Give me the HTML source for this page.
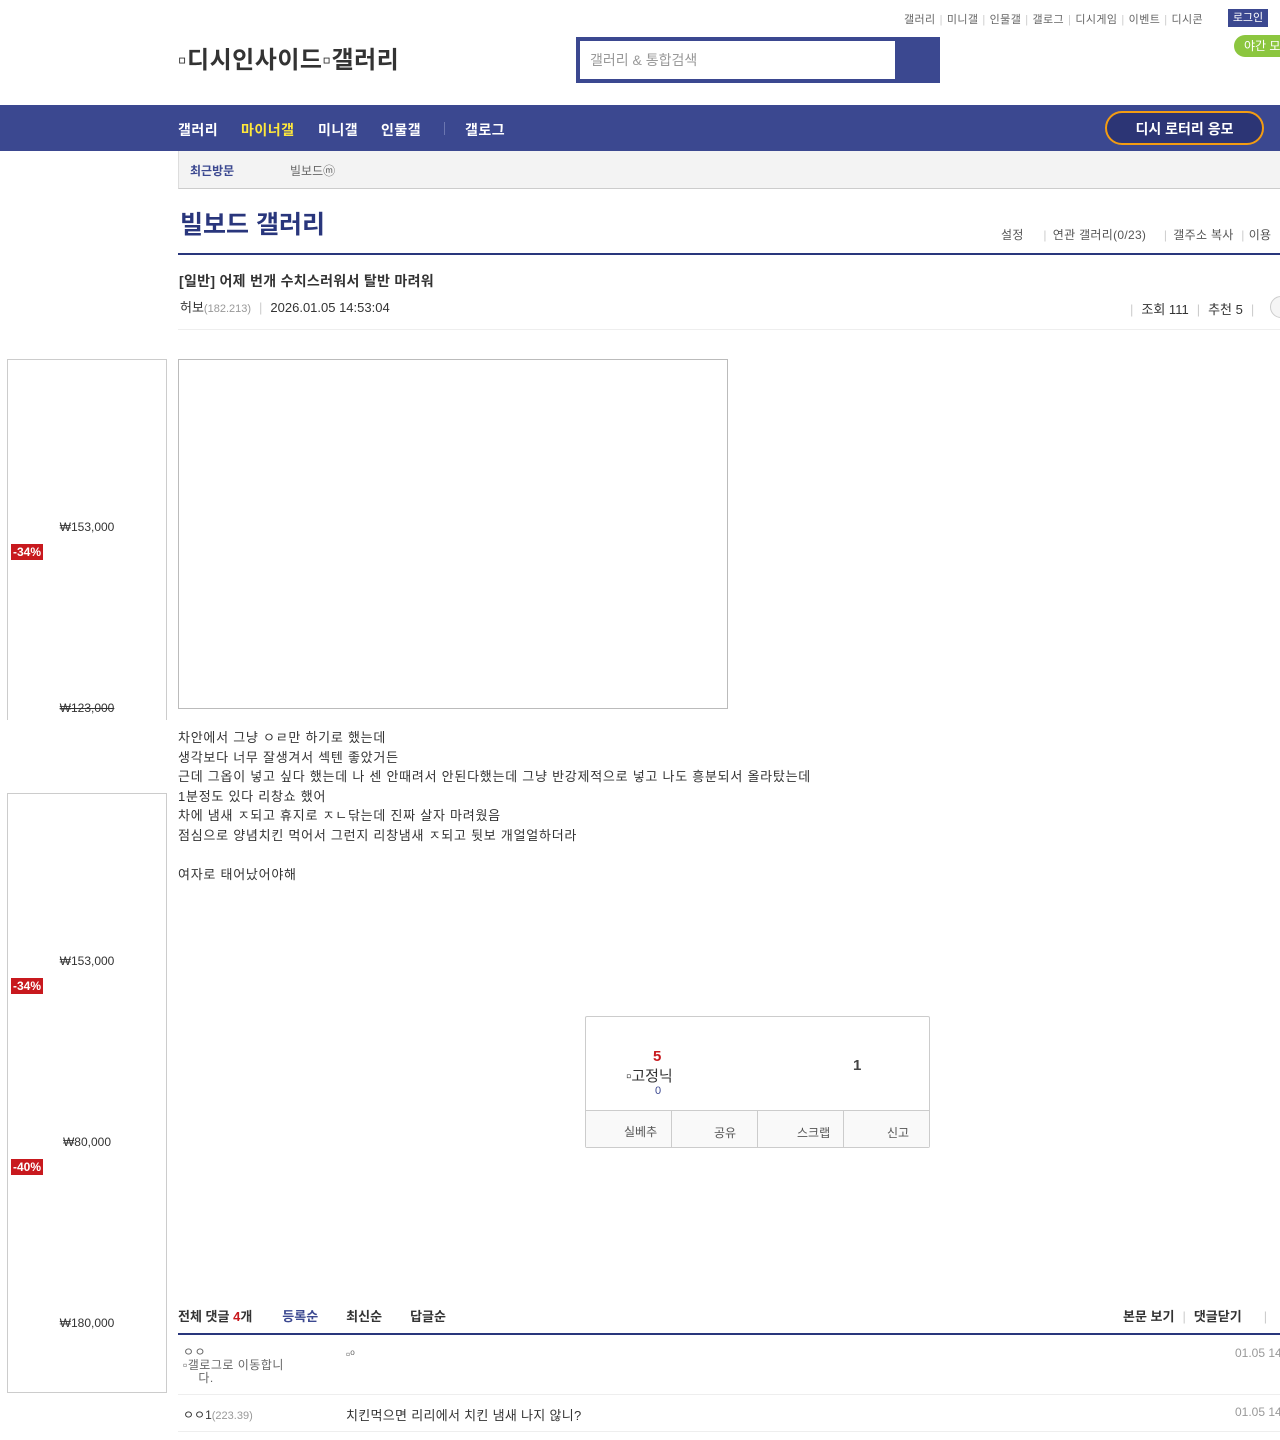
<!DOCTYPE html>
<html><head><meta charset="utf-8"><style>
*{margin:0;padding:0;box-sizing:border-box}
body{width:1280px;height:1440px;position:relative;overflow:hidden;background:#fff;font-family:"Liberation Sans","Noto Sans CJK KR",sans-serif;color:#333}
.a{position:absolute;white-space:nowrap}
.top{font-size:11px;color:#666;letter-spacing:0.4px}
.top span{color:#ccc;margin:0 4px}
.nav{background:#3b4890;top:105px;left:0;width:1280px;height:46px}
.nav .i{color:#fff;font-size:14px;font-weight:bold;top:15px;letter-spacing:0.5px}
.sb{border:1px solid #ccc;border-top:none}
.p{font-size:12px;color:#333;width:158px;text-align:center}
.d{background:#c8191e;color:#fff;font-size:12px;font-weight:bold;padding:0 2px;height:16px;line-height:16px}
.body{font-size:13px;color:#333;line-height:19.5px;letter-spacing:0.75px}
</style></head><body>
<div class="a top" style="top:11px;left:904px">갤러리<span>|</span>미니갤<span>|</span>인물갤<span>|</span>갤로그<span>|</span>디시게임<span>|</span>이벤트<span>|</span>디시콘</div>
<div class="a" style="top:9px;left:1228px;width:40px;height:18px;background:#3b4890;color:#fff;font-size:11px;line-height:18px;text-align:center">로그인</div>
<div class="a" style="top:35px;left:1234px;width:60px;height:22px;background:#8cc63f;border-radius:11px;color:#fff;font-size:12px;line-height:22px;padding-left:10px">야간 모드</div>
<div class="a" style="top:40px;left:178px;font-size:24px;font-weight:bold;color:#333;letter-spacing:0.5px">▫디시인사이드▫갤러리</div>
<div class="a" style="top:37px;left:576px;width:364px;height:46px;background:#3b4890"><div class="a" style="top:4px;left:4px;width:315px;height:38px;background:#fff;color:#999;font-size:14px;line-height:38px;padding-left:10px">갤러리 &amp; 통합검색</div></div>
<div class="a nav">
<div class="a i" style="left:178px">갤러리</div>
<div class="a i" style="left:241px;color:#ffe83b">마이너갤</div>
<div class="a i" style="left:318px">미니갤</div>
<div class="a i" style="left:381px">인물갤</div>
<div class="a" style="left:444px;top:17px;width:1px;height:13px;background:#6b76b0"></div>
<div class="a i" style="left:465px">갤로그</div>
<div class="a" style="left:1105px;top:6px;width:159px;height:34px;border:2px solid #f39c12;border-radius:17px;background:#2c3575;color:#fff;font-size:14px;font-weight:bold;line-height:32px;text-align:center">디시 로터리 응모</div>
</div>
<div class="a" style="top:151px;left:178px;width:1102px;height:38px;background:#f3f3f3;border-left:1px solid #ddd;border-bottom:1px solid #ccc"></div>
<div class="a" style="top:162px;left:190px;font-size:12px;font-weight:bold;color:#3b4890">최근방문</div>
<div class="a" style="top:162px;left:290px;font-size:12px;color:#666">빌보드ⓜ</div>
<div class="a" style="top:205px;left:180px;font-size:25px;font-weight:bold;color:#29367c">빌보드 갤러리</div>
<div class="a" style="top:226px;left:1001px;font-size:12px;color:#555;letter-spacing:0.3px">설정 <span style="color:#ccc;margin:0 6px 0 16px">|</span>연관 갤러리(0/23) <span style="color:#ccc;margin:0 6px 0 14px">|</span>갤주소 복사 <span style="color:#ccc;margin:0 4px">|</span>이용</div>
<div class="a" style="top:253px;left:178px;width:1102px;height:2px;background:#29367c"></div>
<div class="a" style="top:271px;left:179px;font-size:14px;font-weight:bold;color:#333;letter-spacing:0.3px">[일반] 어제 번개 수치스러워서 탈반 마려워</div>
<div class="a" style="top:297px;left:180px;font-size:13px;color:#333">허보<span style="font-size:11px;color:#999">(182.213)</span><span style="color:#ccc;margin:0 8px">|</span>2026.01.05 14:53:04</div>
<div class="a" style="top:299px;left:1130px;font-size:13px;color:#333"><span style="color:#ccc;margin-right:8px">|</span>조회 111<span style="color:#ccc;margin:0 8px">|</span>추천 5<span style="color:#ccc;margin:0 8px">|</span></div>
<div class="a" style="top:296px;left:1270px;width:22px;height:22px;border:1px solid #ccc;border-radius:11px;background:#f5f5f5"></div>
<div class="a" style="top:329px;left:178px;width:1102px;height:1px;background:#eee"></div>
<div class="a sb" style="top:359px;left:7px;width:160px;height:361px;border-top:1px solid #ccc;border-bottom:none"></div>
<div class="a p" style="top:520px;left:8px">₩153,000</div>
<div class="a d" style="top:544px;left:11px">-34%</div>
<div class="a p" style="top:701px;left:8px;text-decoration:line-through">₩123,000</div>
<div class="a sb" style="top:793px;left:7px;width:160px;height:600px;border-top:1px solid #ccc;border-bottom:1px solid #ccc"></div>
<div class="a p" style="top:954px;left:8px">₩153,000</div>
<div class="a d" style="top:978px;left:11px">-34%</div>
<div class="a p" style="top:1135px;left:8px">₩80,000</div>
<div class="a d" style="top:1159px;left:11px">-40%</div>
<div class="a p" style="top:1316px;left:8px">₩180,000</div>
<div class="a" style="top:359px;left:178px;width:550px;height:350px;border:1px solid #bbb"></div>
<div class="a body" style="top:728px;left:178px">차안에서 그냥 ㅇㄹ만 하기로 했는데<br>생각보다 너무 잘생겨서 섹텐 좋았거든<br>근데 그옵이 넣고 싶다 했는데 나 센 안때려서 안된다했는데 그냥 반강제적으로 넣고 나도 흥분되서 올라탔는데<br>1분정도 있다 리창쇼 했어<br>차에 냄새 ㅈ되고 휴지로 ㅈㄴ닦는데 진짜 살자 마려웠음<br>점심으로 양념치킨 먹어서 그런지 리창냄새 ㅈ되고 뒷보 개얼얼하더라<br><br>여자로 태어났어야해</div>
<div class="a" style="top:1016px;left:585px;width:345px;height:132px;border:1px solid #ccc;border-radius:2px">
<div class="a" style="top:31px;left:67px;font-size:15px;font-weight:bold;color:#c8191e">5</div>
<div class="a" style="top:48px;left:40px;font-size:15px;color:#333">▫고정닉</div>
<div class="a" style="top:68px;left:69px;font-size:11px;color:#3b4890">0</div>
<div class="a" style="top:40px;left:267px;font-size:15px;font-weight:bold;color:#444">1</div>
<div class="a" style="top:93px;left:0;width:343px;height:37px;background:#f9f9f9;border-top:1px solid #ccc"></div>
<div class="a" style="top:93px;left:85px;width:1px;height:37px;background:#ccc"></div>
<div class="a" style="top:93px;left:171px;width:1px;height:37px;background:#ccc"></div>
<div class="a" style="top:93px;left:257px;width:1px;height:37px;background:#ccc"></div>
<div class="a" style="top:106px;left:38px;font-size:12px;color:#555">실베추</div>
<div class="a" style="top:107px;left:128px;font-size:12px;color:#555">공유</div>
<div class="a" style="top:107px;left:211px;font-size:12px;color:#555">스크랩</div>
<div class="a" style="top:107px;left:301px;font-size:12px;color:#555">신고</div>
</div>
<div class="a" style="top:1306px;left:178px;font-size:13px;font-weight:bold;color:#333">전체 댓글 <span style="color:#c8191e">4</span>개<span style="color:#3b4890;margin-left:30px">등록순</span><span style="margin-left:28px">최신순</span><span style="margin-left:28px">답글순</span></div>
<div class="a" style="top:1306px;left:1123px;font-size:13px;font-weight:bold;color:#333">본문 보기<span style="color:#ccc;font-weight:normal;margin:0 8px">|</span>댓글닫기<span style="color:#ccc;font-weight:normal;margin-left:22px">|</span></div>
<div class="a" style="top:1333px;left:178px;width:1102px;height:2px;background:#29367c"></div>
<div class="a" style="top:1346px;left:183px;font-size:12px;color:#666;line-height:13px;white-space:normal;width:130px;letter-spacing:0.5px">ㅇㅇ<br>▫갤로그로 이동합니<br>&nbsp;&nbsp;&nbsp;&nbsp;다.</div>
<div class="a" style="top:1347px;left:346px;font-size:12px;color:#666">▫ᵒ</div>
<div class="a" style="top:1346px;left:1235px;font-size:12px;color:#999">01.05 14</div>
<div class="a" style="top:1394px;left:178px;width:1102px;height:1px;background:#eee"></div>
<div class="a" style="top:1406px;left:183px;font-size:12px;color:#333">ㅇㅇ1<span style="font-size:11px;color:#999">(223.39)</span></div>
<div class="a" style="top:1405px;left:346px;font-size:13px;color:#333;letter-spacing:0.3px">치킨먹으면 리리에서 치킨 냄새 나지 않니?</div>
<div class="a" style="top:1405px;left:1235px;font-size:12px;color:#999">01.05 14</div>
<div class="a" style="top:1431px;left:178px;width:1102px;height:1px;background:#eee"></div>
</body></html>
